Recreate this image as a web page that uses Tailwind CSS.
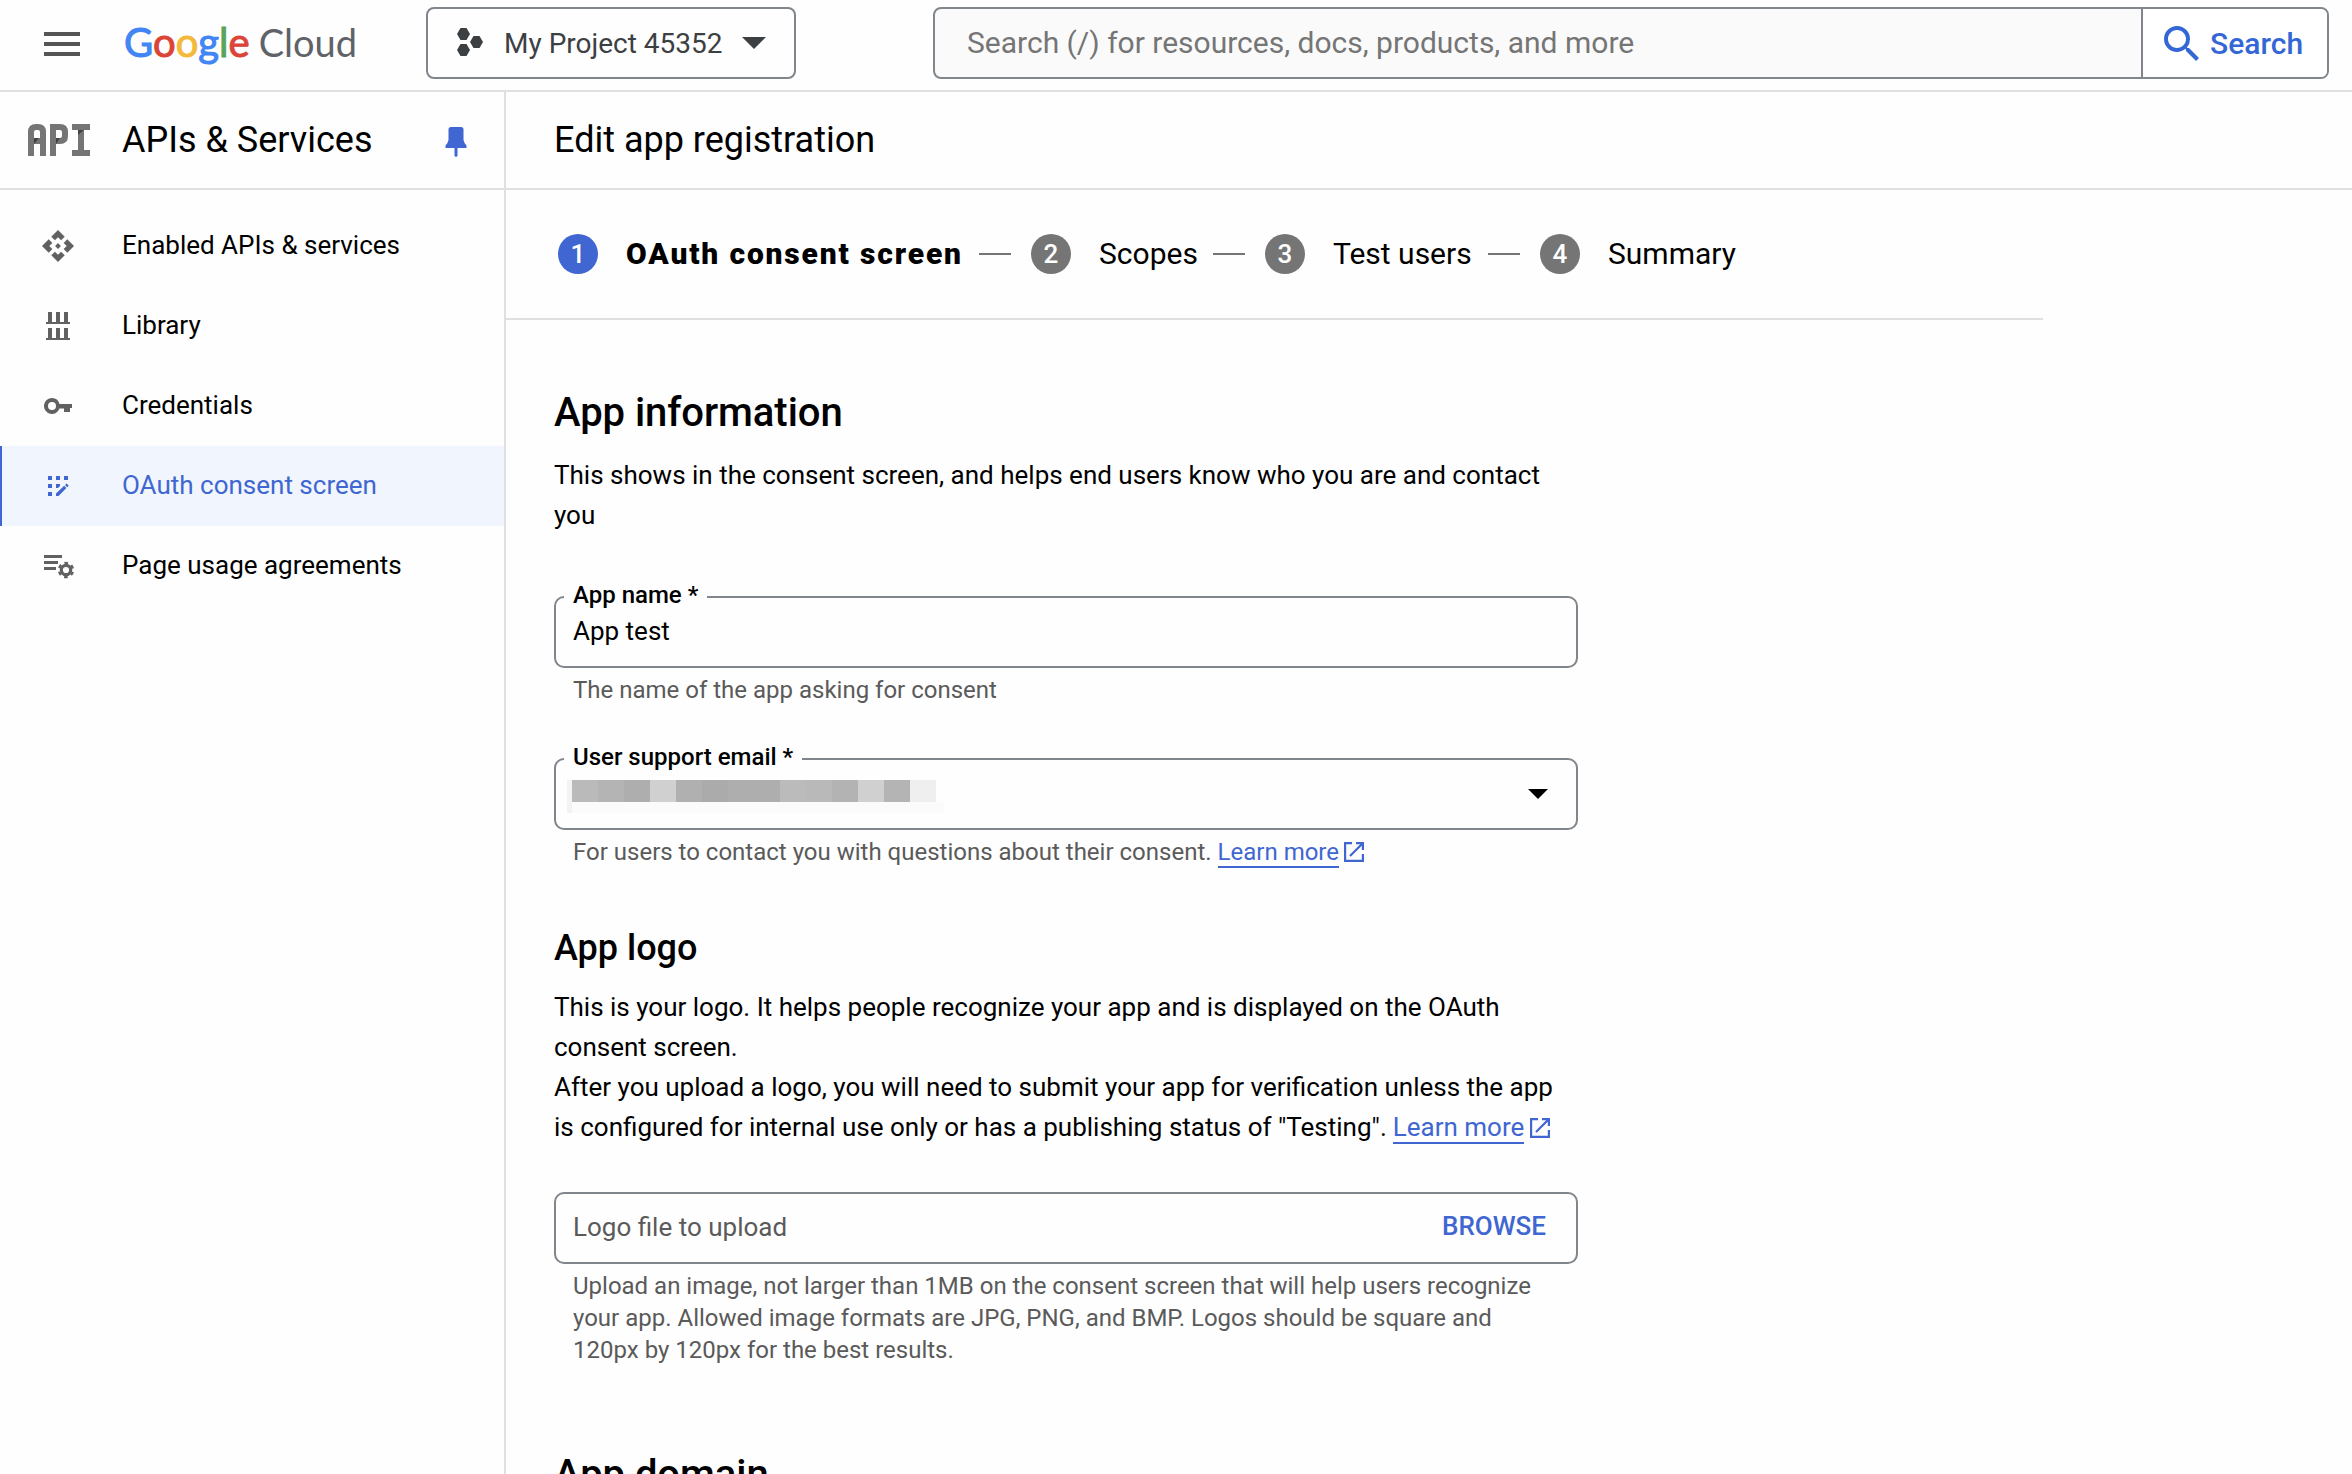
<!DOCTYPE html>
<html lang="en">
<head>
<meta charset="utf-8">
<title>Edit app registration</title>
<script src="https://cdn.jsdelivr.net/npm/@tailwindcss/browser@4"></script>
</head>
<body class="h-[1474px] w-[2352px] overflow-hidden bg-[#fefefe] font-['Roboto',sans-serif] text-[26px] text-black">
<header class="flex h-[92px] items-start border-b-2 border-[#e0e0e0] pt-[7px]">
  <svg class="mt-[25px] ml-[44px] h-6 w-9 shrink-0" viewBox="0 0 36 24" fill="#555"><path d="M0 0h36v4H0zM0 10h36v4H0zM0 20h36v4H0z"/></svg>
  <div class="mt-[13px] ml-11 flex w-[302px] shrink-0 items-baseline gap-[9px] font-['Lato',sans-serif] text-[40px] leading-[44px] whitespace-nowrap">
    <span class="[-webkit-text-stroke:1px]"><span class="text-[#4285f4]">G</span><span class="text-[#db4437]">o</span><span class="text-[#f4b93a]">o</span><span class="text-[#4285f4]">g</span><span class="text-[#57a55a]">l</span><span class="text-[#db4437]">e</span></span>
    <span class="text-[38px] text-[#5f6368]">Cloud</span>
  </div>
  <button class="flex h-[72px] w-[370px] shrink-0 items-center rounded-lg border-2 border-[#80868b] pl-[29px] text-[28px] text-[#3c4043]">
    <svg class="mb-0.5 h-[28px] w-[27px]" viewBox="0 0 27 28" fill="#3c4043"><path d="M3.500 0h6L13 6l-3.500 6h-6L0 6zM16.500 8h6l3.500 6-3.500 6h-6L13 14zM3.500 16h6l3.500 6-3.500 6h-6L0 22z"/></svg>
    <span class="mt-0.5 ml-5 whitespace-nowrap">My Project 45352</span>
    <svg class="ml-5 h-3 w-6" viewBox="0 0 24 12" fill="#3c4043"><path d="M0 0h24L12 12z"/></svg>
  </button>
  <div class="ml-[137px] flex h-[72px] w-[1396px] shrink-0 rounded-lg border-2 border-[#80868b] bg-[#fafafa]">
    <div class="flex-1 pl-8 text-[30px] leading-[68px] text-[#757575]">Search (/) for resources, docs, products, and more</div>
    <button class="flex w-[186px] items-center rounded-r-md border-l-2 border-[#80868b] bg-white pl-[21px] text-[30px] font-medium text-[#3367d6]">
      <svg class="h-[35px] w-[35px]" viewBox="3 3 17.490 17.490" fill="#3367d6"><path d="M15.500 14h-.79l-.28-.27A6.471 6.471 0 0 0 16 9.500 6.500 6.500 0 1 0 9.500 16c1.610 0 3.090-.59 4.230-1.570l.27.280v.79l5 4.990L20.490 19l-4.990-5zm-6 0C7.010 14 5 11.990 5 9.500S7.010 5 9.500 5 14 7.010 14 9.500 11.990 14 9.500 14z"/></svg>
      <span class="ml-[11px]">Search</span>
    </button>
  </div>
</header>
<div class="flex h-[1382px]">
  <aside class="w-[506px] shrink-0 border-r-2 border-[#e0e0e0]">
    <div class="flex h-[98px] items-center border-b-2 border-[#e0e0e0]">
      <svg class="ml-[28px] h-8 w-[62px]" viewBox="0 0 62 32" fill="none" stroke="#757575" stroke-width="6"><path d="M3 32V8q0-5 5-5h2q5 0 5 5v24M3 17h12M25 32V3h7q5 0 5 5v4q0 5-5 5h-7M44 3h18M44 29h18M53 3v26"/><path d="M6 14h5l-5 6zM28 14h4l-4 6zM50 6h6l-6 5z" fill="#424242" stroke="none"/></svg>
      <h1 class="ml-8 w-[323px] text-[36px]">APIs &amp; Services</h1>
      <svg class="mt-1 h-[30px] w-[22px]" viewBox="0 0 22 30" fill="#3f66d1"><path d="M6 0h10q2.500 0 2.500 2.500V13q.5 3 3 5.500V21h-9v8l-1.500 1-1.500-1v-8h-9v-2.500q2.500-2.500 3-5.500V2.500Q3.500 0 6 0z"/></svg>
    </div>
    <nav class="pt-4">
      <a class="flex h-20 items-center border-l-2 border-transparent pl-10">
        <svg class="h-8 w-8" viewBox="1 1 22 22" fill="#616161"><path d="M14 12l-2 2-2-2 2-2 2 2zm-2-6l2.120 2.120 2.500-2.500L12 1 7.380 5.620l2.500 2.500L12 6zm-6 6l2.120-2.120-2.500-2.500L1 12l4.620 4.620 2.500-2.500L6 12zm12 0l-2.120 2.120 2.500 2.500L23 12l-4.620-4.620-2.500 2.500L18 12zm-6 6l-2.120-2.120-2.500 2.500L12 23l4.620-4.620-2.500-2.500L12 18z"/></svg>
        <span class="mb-0.5 ml-12">Enabled APIs &amp; services</span></a>
      <a class="flex h-20 items-center border-l-2 border-transparent pl-10">
        <svg class="h-8 w-8" viewBox="0 0 32 32" fill="#616161"><path d="M6 2h4v10h4V2h4v10h4V2h4v10h2v2H4v-2h2zM6 18h4v10h4V18h4v10h4V18h4v10h2v2H4v-2h2z"/></svg>
        <span class="mb-0.5 ml-12">Library</span></a>
      <a class="flex h-20 items-center border-l-2 border-transparent pl-10">
        <svg class="h-8 w-8" viewBox="0 0 32 32" fill="#616161"><path fill-rule="evenodd" d="M10 8a8 8 0 1 0 7.500 10.600H22V22h6v-4h2v-4H17.500A8 8 0 0 0 10 8zm0 4a4 4 0 1 1 0 8 4 4 0 0 1 0-8z"/></svg>
        <span class="mb-0.5 ml-12">Credentials</span></a>
      <a class="flex h-20 items-center border-l-2 border-[#3f66d1] bg-[#f0f5fe] pl-10 text-[#3f66d1]">
        <svg class="h-8 w-8" viewBox="0 0 32 32" fill="#3f66d1"><path d="M6 6h4v4H6zM14 6h4v4h-4zM22 6h4v4h-4zM6 14h4v4H6zM14 14h4v2l-2 2h-2zM6 22h4v4H6zM14 26v-2.600l8.200-7.700 2.200 2.200L16.600 26zM23 15l1.600-1.500 2.200 2.200-1.600 1.500z"/></svg>
        <span class="mb-0.5 ml-12">OAuth consent screen</span></a>
      <a class="flex h-20 items-center border-l-2 border-transparent pl-10">
        <svg class="h-8 w-8" viewBox="0 0 32 32" fill="none" stroke="#616161"><path d="M2 6.500h18M2 12.500h14M2 18.500h12" stroke-width="3"/><circle cx="24" cy="20" r="4.700" stroke-width="3.200"/><circle cx="24" cy="20" r="7" stroke-width="2.400" stroke-dasharray="3.600 3.730" stroke-dashoffset="-1.900"/></svg>
        <span class="mb-0.5 ml-12">Page usage agreements</span></a>
    </nav>
  </aside>
  <main class="flex-1">
    <div class="h-[98px] border-b-2 border-[#e0e0e0] pl-12 text-[36px] leading-[96px]">Edit app registration</div>
    <div class="flex h-[130px] w-[1537px] items-center border-b-2 border-[#e0e0e0] pl-[52px] text-[30px] whitespace-nowrap">
      <span class="flex size-10 items-center justify-center rounded-full bg-[#3f66d1] text-[26px] font-medium text-white">1</span>
      <span class="mb-0.5 ml-7 w-[337px] font-black tracking-[1.85px]">OAuth consent screen</span>
      <span class="ml-4 h-0.5 w-8 bg-[#757575]"></span>
      <span class="ml-5 flex size-10 items-center justify-center rounded-full bg-[#757575] text-[26px] font-medium text-white">2</span>
      <span class="mb-0.5 ml-7 w-[98px]">Scopes</span>
      <span class="ml-4 h-0.5 w-8 bg-[#757575]"></span>
      <span class="ml-5 flex size-10 items-center justify-center rounded-full bg-[#757575] text-[26px] font-medium text-white">3</span>
      <span class="mb-0.5 ml-7 w-[139px]">Test users</span>
      <span class="ml-4 h-0.5 w-8 bg-[#757575]"></span>
      <span class="ml-5 flex size-10 items-center justify-center rounded-full bg-[#757575] text-[26px] font-medium text-white">4</span>
      <span class="mb-0.5 ml-7">Summary</span>
    </div>
    <div class="ml-12 w-[1024px] pt-[67px]">
      <h2 class="text-[40px] leading-[52px] font-medium tracking-[-0.05px]">App information</h2>
      <p class="mt-4 leading-10">This shows in the consent screen, and helps end users know who you are and contact<br>you</p>
      <fieldset class="mt-[44px] h-[89px] rounded-[10px] border-2 border-[#80868b] pl-2">
        <legend class="h-9 px-[9px] text-[24px] leading-8 font-medium">App name *</legend>
        <div class="-mt-1 pl-[9px] leading-10">App test</div>
      </fieldset>
      <p class="mt-1.5 pl-[19px] text-[24px] leading-8 text-[#5a5a5a]">The name of the app asking for consent</p>
      <fieldset class="mt-[35px] h-[89px] rounded-[10px] border-2 border-[#80868b] pl-2">
        <legend class="h-9 px-[9px] text-[24px] leading-8 font-medium">User support email *</legend>
        <div class="-mt-0.5 flex items-start justify-between pl-[3px]">
          <svg class="h-[38px] w-[377px]" viewBox="0 0 377 38" shape-rendering="crispEdges"><path fill="#f3f3f3" d="M0 5h5v33H0z"/><path fill="#fbfbfb" d="M5 27h372v11H5z"/><path fill="#bababa" d="M5 5h26v22H5z"/><path fill="#b4b4b4" d="M31 5h26v22H31z"/><path fill="#aeaeae" d="M57 5h26v22H57z"/><path fill="#d0d0d0" d="M83 5h26v22H83z"/><path fill="#b0b0b0" d="M109 5h26v22h-26z"/><path fill="#ababab" d="M135 5h26v22h-26z"/><path fill="#aeaeae" d="M161 5h52v22h-52z"/><path fill="#bbb" d="M213 5h26v22h-26z"/><path fill="#b9b9b9" d="M239 5h26v22h-26z"/><path fill="#b3b3b3" d="M265 5h26v22h-26z"/><path fill="#d0d0d0" d="M291 5h26v22h-26z"/><path fill="#b4b4b4" d="M317 5h26v22h-26z"/><path fill="#efefef" d="M343 5h26v22h-26z"/></svg>
          <svg class="mt-[14px] mr-7 h-[10px] w-5" viewBox="0 0 20 10"><path d="M0 0h20L10 10z"/></svg>
        </div>
      </fieldset>
      <p class="mt-1.5 flex pl-[19px] text-[24px] leading-8 whitespace-nowrap text-[#5a5a5a]">For users to contact you with questions about their consent.<a class="ml-[6px] h-8 border-b-2 border-[#3f66d1] text-[#3f66d1]">Learn more</a><svg class="mt-[6px] ml-[5px] size-5" viewBox="0 0 20 20" fill="none" stroke="#3f66d1" stroke-width="2.200"><path d="M8 1.100H1.100v17.800h17.800V12M12 1.100h6.900V8M18.500 1.500L6 14"/></svg></p>
      <h3 class="mt-14 text-[36px] leading-[48px] font-medium">App logo</h3>
      <div class="mt-[15px] leading-10 whitespace-nowrap">
        <p>This is your logo. It helps people recognize your app and is displayed on the OAuth<br>consent screen.<br>After you upload a logo, you will need to submit your app for verification unless the app</p>
        <p class="flex h-10">is configured for internal use only or has a publishing status of "Testing".<a class="ml-[6px] h-[37px] border-b-2 border-[#3f66d1] text-[#3f66d1]">Learn more</a><svg class="mt-[11px] ml-[6px] size-5" viewBox="0 0 20 20" fill="none" stroke="#3f66d1" stroke-width="2.200"><path d="M8 1.100H1.100v17.800h17.800V12M12 1.100h6.900V8M18.500 1.500L6 14"/></svg></p>
      </div>
      <div class="mt-[45px] flex h-[72px] items-center justify-between rounded-[10px] border-2 border-[#80868b] pr-[30px] pb-[3px] pl-[17px]"><span class="mt-0.5 text-[#5a5a5a]">Logo file to upload</span><button class="font-medium text-[#3f66d1]">BROWSE</button></div>
      <p class="mt-[6px] pl-[19px] text-[24px] leading-8 text-[#5a5a5a]">Upload an image, not larger than 1MB on the consent screen that will help users recognize<br>your app. Allowed image formats are JPG, PNG, and BMP. Logos should be square and<br>120px by 120px for the best results.</p>
      <h2 class="mt-[83px] text-[40px] leading-[52px] font-medium tracking-[-0.05px]">App domain</h2>
    </div>
  </main>
</div>
</body>
</html>
